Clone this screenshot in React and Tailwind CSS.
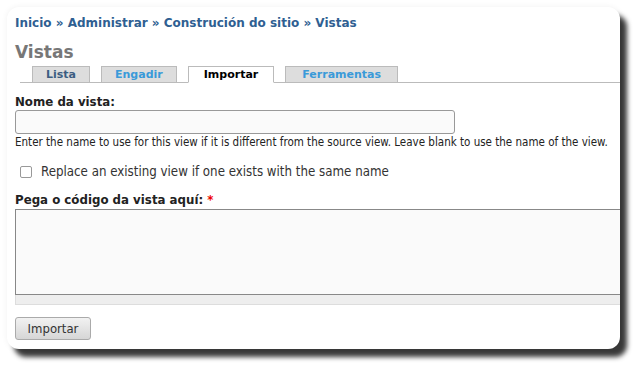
import React from "react";

const tabs = [
  { label: "Lista", color: "text-[#3c5d82]", pad: "px-[13px]", active: false },
  { label: "Engadir", color: "text-[#3a9ad9]", pad: "px-[13px]", active: false },
  { label: "Importar", color: "text-black", pad: "px-[15px]", active: true },
  { label: "Ferramentas", color: "text-[#3a9ad9]", pad: "px-[16px]", active: false },
];

export default function App() {
  return (
    <div className="h-[372px] w-[643px] overflow-hidden bg-white pl-[7px] pt-[7px] [font-family:'DejaVu_Sans',sans-serif]">
      <div className="h-[342px] w-[613px] overflow-hidden rounded-[12px] bg-white pl-[8px] pt-[8px] shadow-[7px_8px_5px_rgba(0,0,0,0.78),0_0_6px_rgba(0,0,0,0.06)]">
        <div className="text-[12px] font-bold leading-[16px] text-[#2f5f92]">
          Inicio » Administrar » Construción do sitio » Vistas
        </div>

        <h1 className="mt-[11px] text-[17px] font-bold leading-[20px] text-[#777]">Vistas</h1>

        <div className="ml-[5px] mt-[4px] flex items-end gap-[11px] border-b border-[#bbb] pl-[12px]">
          {tabs.map((t) => (
            <div
              key={t.label}
              className={`-mb-px border border-[#bbb] text-[11px] font-bold leading-[15px] ${t.pad} ${t.color} ${
                t.active ? "border-b-white bg-white" : "bg-[#ddd]"
              }`}
            >
              {t.label}
            </div>
          ))}
        </div>

        <div className="mt-[12px] text-[11.8px] font-bold leading-[14px] text-[#222]">Nome da vista:</div>
        <div className="mt-[1px] h-[24px] w-[440px] rounded-[3px] border border-[#999] bg-[#fafafa]" />
        <div className="mt-[1px] text-[11.5px] leading-[14px] text-[#222] [font-family:'DejaVu_Sans_Condensed',sans-serif]">
          Enter the name to use for this view if it is different from the source view. Leave blank to use the name of the view.
        </div>

        <label className="mt-[15px] flex items-center gap-[9px] pl-[5px] text-[13.2px] leading-[16px] text-[#333] [font-family:'DejaVu_Sans_Condensed',sans-serif]">
          <span className="h-[12px] w-[12px] rounded-[2px] border border-[#999] bg-white" />
          Replace an existing view if one exists with the same name
        </label>

        <div className="mt-[13px] text-[11.8px] font-bold leading-[14px] text-[#222]">
          Pega o código da vista aquí: <span className="text-[#e00]">*</span>
        </div>
        <div className="mt-[2px] w-[640px]">
          <div className="h-[86px] border border-[#888] bg-[#fafafa]" />
          <div className="h-[10px] border-x border-b border-[#ddd] bg-[#eee]" />
        </div>

        <button className="mt-[12px] h-[23px] w-[76px] rounded-[3px] border border-[#aaa] bg-gradient-to-b from-[#f2f2f2] to-[#d6d6d6] text-[13px] text-[#333] [font-family:'DejaVu_Sans_Condensed',sans-serif]">
          Importar
        </button>
      </div>
    </div>
  );
}
